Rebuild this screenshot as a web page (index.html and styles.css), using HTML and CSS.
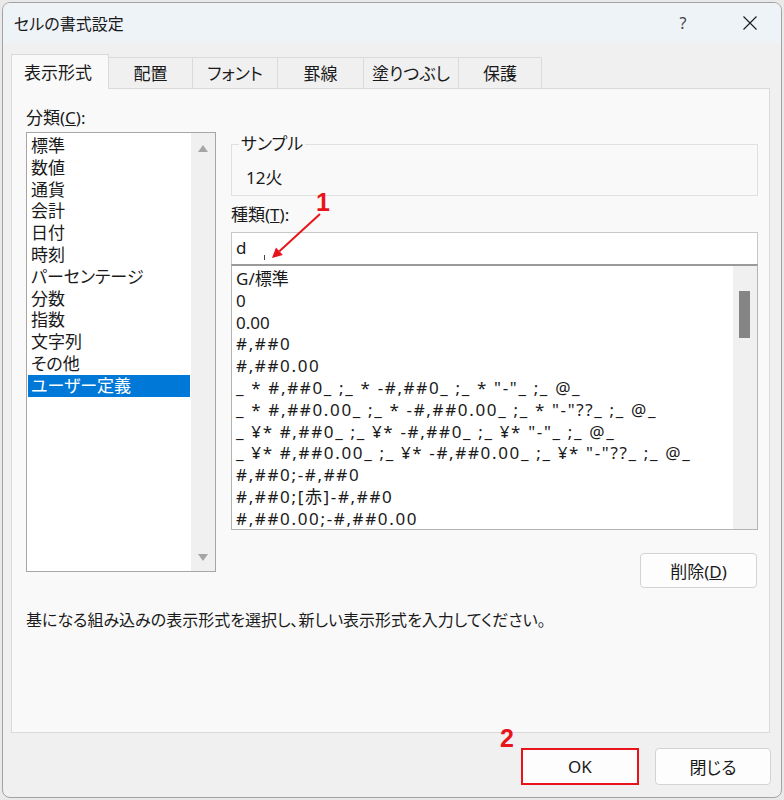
FILE: index.html
```html
<!DOCTYPE html>
<html lang="ja">
<head>
<meta charset="utf-8">
<title>セルの書式設定</title>
<link rel="stylesheet" href="styles.css">
</head>
<body>
<div class="dialog">
  <div class="titlebar">
    <span class="title">セルの書式設定</span>
    <span class="help">?</span>
    <span class="close">
      <svg width="14" height="14" viewBox="0 0 14 14"><path d="M0.5 0.5 L13.5 13.5 M13.5 0.5 L0.5 13.5" stroke="#1a1a1a" stroke-width="1.1" fill="none"/></svg>
    </span>
  </div>

  <div class="body">
    <div class="tabs">
      <div class="tab active w1">表示形式</div>
      <div class="tab w2">配置</div>
      <div class="tab w3">フォント</div>
      <div class="tab w4">罫線</div>
      <div class="tab w5">塗りつぶし</div>
      <div class="tab w6">保護</div>
    </div>

    <div class="panel">
      <div class="columns">
        <div class="left">
          <div class="label">分類(<u>C</u>):</div>
          <div class="catlist">
            <div class="items">
              <div class="item">標準</div>
              <div class="item">数値</div>
              <div class="item">通貨</div>
              <div class="item">会計</div>
              <div class="item">日付</div>
              <div class="item">時刻</div>
              <div class="item">パーセンテージ</div>
              <div class="item">分数</div>
              <div class="item">指数</div>
              <div class="item">文字列</div>
              <div class="item">その他</div>
              <div class="item selected">ユーザー定義</div>
            </div>
            <div class="vscroll">
              <span class="arrow-up"></span>
              <span class="arrow-down"></span>
            </div>
          </div>
        </div>

        <div class="right">
          <fieldset class="sample">
            <legend>サンプル</legend>
            <div class="sample-value">12火</div>
          </fieldset>
          <div class="label type-label">種類(<u>T</u>):</div>
          <div class="input">d</div>
          <div class="fmtlist">
            <div class="fmt-items">
              <div class="fmt">G/標準</div>
              <div class="fmt">0</div>
              <div class="fmt">0.00</div>
              <div class="fmt sym">#,##0</div>
              <div class="fmt sym">#,##0.00</div>
              <div class="fmt sym">_ * #,##0_ ;_ * -#,##0_ ;_ * "-"_ ;_ @_</div>
              <div class="fmt sym">_ * #,##0.00_ ;_ * -#,##0.00_ ;_ * "-"??_ ;_ @_</div>
              <div class="fmt sym">_ ¥* #,##0_ ;_ ¥* -#,##0_ ;_ ¥* "-"_ ;_ @_</div>
              <div class="fmt sym">_ ¥* #,##0.00_ ;_ ¥* -#,##0.00_ ;_ ¥* "-"??_ ;_ @_</div>
              <div class="fmt sym">#,##0;-#,##0</div>
              <div class="fmt sym">#,##0;[赤]-#,##0</div>
              <div class="fmt sym">#,##0.00;-#,##0.00</div>
            </div>
            <div class="fscroll"><span class="thumb"></span></div>
          </div>
          <div class="delete-row">
            <button class="btn delete">削除(<u>D</u>)</button>
          </div>
        </div>
      </div>
      <p class="desc">基になる組み込みの表示形式を選択し、新しい表示形式を入力してください。</p>
    </div>
  </div>

  <div class="footer">
    <button class="btn ok">OK</button>
    <button class="btn">閉じる</button>
  </div>

  <span class="note note1">1</span>
  <span class="note note2">2</span>
  <svg class="overlay" width="780" height="796" viewBox="2 2 780 796">
    <line x1="320" y1="214" x2="279.4" y2="251.2" stroke="#e8141c" stroke-width="2"/>
    <polygon points="272,258 282.8,254.9 276,247.5" fill="#e8141c"/>
    <line x1="264.5" y1="255" x2="264.5" y2="260" stroke="#444" stroke-width="1"/>
  </svg>
</div>
</body>
</html>
```

FILE: styles.css
```css
* { box-sizing: border-box; }

html, body {
  margin: 0;
  padding: 0;
}

body {
  width: 784px;
  height: 800px;
  background: #e9e9e9;
  font-family: "Noto Sans", "Noto Sans CJK JP", sans-serif;
  font-feature-settings: "palt";
  font-size: 17px;
  color: #1a1a1a;
  overflow: hidden;
}

.dialog {
  position: relative;
  margin: 2px 0 0 2px;
  width: 780px;
  height: 796px;
  border: 1px solid #a3a3a3;
  border-radius: 8px;
  overflow: hidden;
  background: #f0f0f0;
  display: flex;
  flex-direction: column;
}

.titlebar {
  height: 40px;
  flex: none;
  display: flex;
  align-items: center;
  padding-left: 11px;
  background: #eef3f8;
}

.title {
  font-size: 16px;
  color: #1a1a1a;
}

.help {
  margin-left: auto;
  width: 20px;
  text-align: center;
  font-family: "Noto Sans", sans-serif;
  font-size: 16px;
  color: #444;
}

.close {
  margin-left: 43px;
  margin-right: 17px;
  width: 28px;
  height: 28px;
  display: flex;
  align-items: center;
  justify-content: center;
}

.close svg { display: block; }

.body {
  flex: 1;
  display: flex;
  flex-direction: column;
  padding: 11px 11px 0 8px;
}

.tabs {
  display: flex;
  align-items: flex-end;
  height: 34px;
  position: relative;
  z-index: 1;
}

.tab {
  height: 31px;
  border: 1px solid #dadada;
  border-left: none;
  border-bottom: none;
  background: #f0f0f0;
  display: flex;
  align-items: center;
  justify-content: center;
  font-size: 17px;
  line-height: 22px;
  padding-top: 1px;
}

.tab.active {
  height: 35px;
  margin-bottom: -1px;
  border-left: 1px solid #dadada;
  background: #f9f9f9;
  justify-content: flex-start;
  padding-left: 12px;
}

.w1 { width: 98px; }
.w2 { width: 84px; }
.w3 { width: 85px; }
.w4 { width: 86px; }
.w5 { width: 95px; }
.w6 { width: 83px; }

.panel {
  flex: 1;
  background: #f9f9f9;
  border: 1px solid #dadada;
  padding: 18px 11px 0 14px;
}

.columns {
  display: flex;
  gap: 15px;
}

.label {
  line-height: 22px;
  height: 22px;
}

.left {
  width: 190px;
  flex: none;
}

.catlist {
  margin-top: 3px;
  width: 190px;
  height: 440px;
  border: 1px solid #a6a6a6;
  background: #fff;
  display: flex;
}

.items {
  flex: 1;
  padding: 2px 1px 0;
}

.item {
  line-height: 21.8px;
  height: 21.8px;
  padding-left: 3px;
  white-space: nowrap;
}

.item.selected {
  background: #0078d7;
  color: #fff;
}

.vscroll {
  width: 24px;
  flex: none;
  background: #f0f0f0;
  display: flex;
  flex-direction: column;
  justify-content: space-between;
  align-items: center;
  padding: 12px 0 10px;
}

.arrow-up, .arrow-down {
  width: 0;
  height: 0;
  border-left: 5px solid transparent;
  border-right: 5px solid transparent;
}

.arrow-up { border-bottom: 7px solid #a5a5a5; }
.arrow-down { border-top: 7px solid #a5a5a5; }

.right {
  flex: none;
  width: 527px;
}

.sample {
  margin: 26px 0 0 0;
  padding: 12px 0 6px 14px;
  border: 1px solid #e0e0e0;
  min-inline-size: 0;
}

.sample legend {
  margin-left: -7px;
  padding: 0 2px;
  line-height: 22px;
}

.sample-value {
  line-height: 22px;
}

.type-label {
  margin-top: 8px;
}

.input {
  margin-top: 6px;
  height: 32px;
  border: 1px solid #c8c8c8;
  border-bottom: none;
  background: #fff;
  padding-left: 4px;
  line-height: 30px;
}

.fmtlist {
  height: 266px;
  border: 1px solid #b4b4b4;
  border-top: 2px solid #9a9a9a;
  background: #fff;
  display: flex;
}

.fmt-items {
  flex: 1;
  overflow: hidden;
  padding: 2px 0 0 4px;
}

.fmt {
  line-height: 21.8px;
  height: 21.8px;
  white-space: pre;
}

.fmt.sym {
  letter-spacing: 1.65px;
}

.fscroll {
  width: 24px;
  flex: none;
  background: #f0f0f0;
  padding: 25px 0 0 6px;
}

.thumb {
  display: block;
  width: 11px;
  height: 47px;
  background: #858585;
}

.delete-row {
  display: flex;
  justify-content: flex-end;
  margin-top: 23px;
  padding-right: 1px;
}

.btn {
  font-family: "Noto Sans", "Noto Sans CJK JP", sans-serif;
  font-feature-settings: "palt";
  font-size: 17px;
  color: #1a1a1a;
  background: #fdfdfd;
  border: 1px solid #d3d3d3;
  border-radius: 4px;
  padding: 0;
  height: 35px;
}

.delete {
  width: 117px;
}

.desc {
  margin: 21px 0 0 0;
  font-size: 16px;
  line-height: 22px;
}

.footer {
  flex: none;
  height: 64px;
  display: flex;
  justify-content: flex-end;
  gap: 16px;
  padding: 15px 10px 0 0;
}

.footer .btn {
  width: 116px;
  height: 37px;
}

.footer .ok {
  width: 118px;
  border: 2px solid #e8141c;
  border-radius: 0;
  background: #fdfdfd;
}

.note {
  position: absolute;
  font-family: "Liberation Sans", Arial, sans-serif;
  font-weight: bold;
  font-size: 25px;
  line-height: 25px;
  color: #e8141c;
}

.note1 { left: 313px; top: 187px; }
.note2 { left: 497px; top: 723px; }

.overlay {
  position: absolute;
  left: -1px;
  top: -1px;
  pointer-events: none;
}
```
